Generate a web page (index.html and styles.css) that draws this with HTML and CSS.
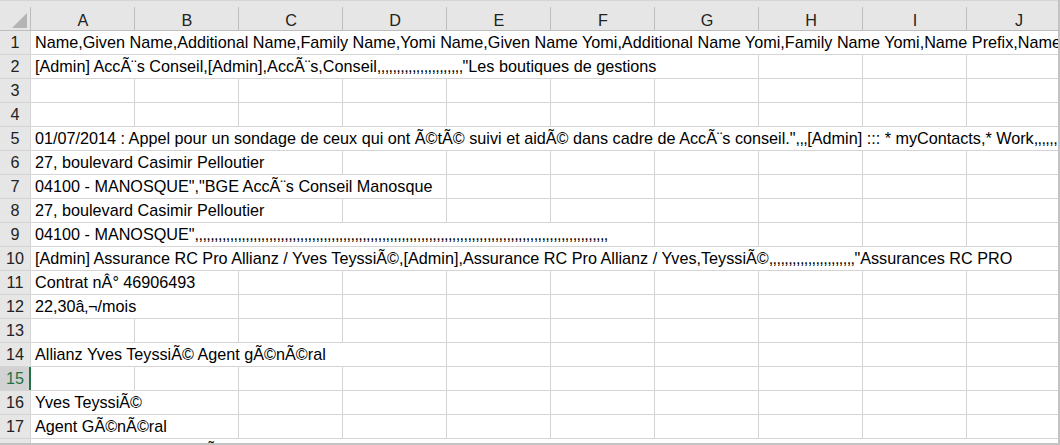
FILE: index.html
```html
<!DOCTYPE html>
<html lang="fr">
<head>
<meta charset="utf-8">
<title>contacts.csv</title>
<link rel="stylesheet" href="styles.css">
</head>
<body>
<div class="sheet">
  <div class="colhead">
    <div class="corner"><span class="tri"></span></div>
    <div class="ch">A</div><div class="ch">B</div><div class="ch">C</div><div class="ch">D</div><div class="ch">E</div>
    <div class="ch">F</div><div class="ch">G</div><div class="ch">H</div><div class="ch">I</div><div class="ch">J</div>
  </div>
  <div class="grid">
    <div class="rh">1</div><div class="c s10">Name,Given Name,Additional Name,Family Name,Yomi Name,Given Name Yomi,Additional Name Yomi,Family Name Yomi,Name Prefix,Name Suffix,Initials,Nickname</div>

    <div class="rh">2</div><div class="c s7">[Admin] AccÃ¨s Conseil,[Admin],AccÃ¨s,Conseil<span class="cm">,,,,,,,,,,,,,,,,,,,,,,</span>"Les boutiques de gestions</div><div class="c"></div><div class="c"></div><div class="c"></div>

    <div class="rh">3</div><div class="c"></div><div class="c"></div><div class="c"></div><div class="c"></div><div class="c"></div><div class="c"></div><div class="c"></div><div class="c"></div><div class="c"></div><div class="c"></div>

    <div class="rh">4</div><div class="c"></div><div class="c"></div><div class="c"></div><div class="c"></div><div class="c"></div><div class="c"></div><div class="c"></div><div class="c"></div><div class="c"></div><div class="c"></div>

    <div class="rh">5</div><div class="c s10">01/07/2014 : Appel pour un sondage de ceux qui ont Ã©tÃ© suivi et aidÃ© dans cadre de AccÃ¨s conseil."<span class="cm">,,,</span>[Admin] ::: * myContacts,* Work<span class="cm">,,,,,,,</span></div>

    <div class="rh">6</div><div class="c s3">27, boulevard Casimir Pelloutier</div><div class="c"></div><div class="c"></div><div class="c"></div><div class="c"></div><div class="c"></div><div class="c"></div><div class="c"></div>

    <div class="rh">7</div><div class="c s4">04100 - MANOSQUE","BGE AccÃ¨s Conseil Manosque</div><div class="c"></div><div class="c"></div><div class="c"></div><div class="c"></div><div class="c"></div><div class="c"></div>

    <div class="rh">8</div><div class="c s3">27, boulevard Casimir Pelloutier</div><div class="c"></div><div class="c"></div><div class="c"></div><div class="c"></div><div class="c"></div><div class="c"></div><div class="c"></div>

    <div class="rh">9</div><div class="c s6">04100 - MANOSQUE"<span class="cm">,,,,,,,,,,,,,,,,,,,,,,,,,,,,,,,,,,,,,,,,,,,,,,,,,,,,,,,,,,,,,,,,,,,,,,,,,,,,,,,,,,,,,,,,,,,,,,,,,,,,,,,,,,</span></div><div class="c"></div><div class="c"></div><div class="c"></div><div class="c"></div>

    <div class="rh">10</div><div class="c s10">[Admin] Assurance RC Pro Allianz / Yves TeyssiÃ©,[Admin],Assurance RC Pro Allianz / Yves,TeyssiÃ©<span class="cm">,,,,,,,,,,,,,,,,,,,,,,</span>"Assurances RC PRO</div>

    <div class="rh">11</div><div class="c s2">Contrat nÂ° 46906493</div><div class="c"></div><div class="c"></div><div class="c"></div><div class="c"></div><div class="c"></div><div class="c"></div><div class="c"></div><div class="c"></div>

    <div class="rh">12</div><div class="c s2">22,30â‚¬/mois</div><div class="c"></div><div class="c"></div><div class="c"></div><div class="c"></div><div class="c"></div><div class="c"></div><div class="c"></div><div class="c"></div>

    <div class="rh">13</div><div class="c"></div><div class="c"></div><div class="c"></div><div class="c"></div><div class="c"></div><div class="c"></div><div class="c"></div><div class="c"></div><div class="c"></div><div class="c"></div>

    <div class="rh">14</div><div class="c s4">Allianz Yves TeyssiÃ© Agent gÃ©nÃ©ral</div><div class="c"></div><div class="c"></div><div class="c"></div><div class="c"></div><div class="c"></div><div class="c"></div>

    <div class="rh sel">15</div><div class="c"></div><div class="c"></div><div class="c"></div><div class="c"></div><div class="c"></div><div class="c"></div><div class="c"></div><div class="c"></div><div class="c"></div><div class="c"></div>

    <div class="rh">16</div><div class="c s2">Yves TeyssiÃ©</div><div class="c"></div><div class="c"></div><div class="c"></div><div class="c"></div><div class="c"></div><div class="c"></div><div class="c"></div><div class="c"></div>

    <div class="rh">17</div><div class="c s2">Agent GÃ©nÃ©ral</div><div class="c"></div><div class="c"></div><div class="c"></div><div class="c"></div><div class="c"></div><div class="c"></div><div class="c"></div><div class="c"></div>

    <div class="rh">18</div><div class="c s10">Interlocuteur : M. TeyssiÃ© - Agent Allianz</div>
  </div>
</div>
</body>
</html>
```
FILE: styles.css
```css
* { box-sizing: border-box; }

html, body {
  margin: 0;
  padding: 0;
  background: #ffffff;
}

.sheet {
  width: 1060px;
  height: 445px;
  overflow: hidden;
  border-right: 2px solid #c3c3c3;
  border-bottom: 2px solid #c3c3c3;
  background: #ffffff;
  font-family: "Liberation Sans", Arial, sans-serif;
  font-size: 16.2px;
  color: #000000;
}

.colhead {
  display: grid;
  grid-template-columns: 31px repeat(10, 104px);
  width: max-content;
  height: 31px;
  background: #e6e6e6;
  border-top: 1px solid #d6d6d6;
  border-bottom: 1px solid #bdbdbd;
}

.corner {
  display: flex;
  align-items: flex-end;
  justify-content: flex-end;
  padding: 0 4px 3px 0;
  position: relative;
}

.corner::after,
.ch::after {
  content: "";
  position: absolute;
  right: 0;
  top: 6px;
  bottom: 0;
  border-right: 1px solid #bdbdbd;
}

.tri {
  width: 0;
  height: 0;
  border-left: 15px solid transparent;
  border-bottom: 15px solid #b4b4b4;
}

.ch {
  position: relative;
  padding-top: 8px;
  text-align: center;
  line-height: 22px;
  color: #222222;
}

.grid {
  display: grid;
  grid-template-columns: 30px repeat(10, 103px);
  grid-auto-rows: 23px;
  gap: 1px;
  width: max-content;
  background: #d4d4d4;
}

.rh {
  background: #e6e6e6;
  text-align: center;
  line-height: 23px;
  color: #222222;
}

.rh.sel {
  background: #d2d2d2;
  color: #217346;
  box-shadow: inset -1px 0 0 #217346, 1px 0 0 #217346;
}

.c {
  background: #ffffff;
  padding: 0 4px;
  line-height: 23px;
  white-space: nowrap;
  overflow: hidden;
}

.cm {
  letter-spacing: -0.6px;
}

.s2 { grid-column: span 2; }
.s3 { grid-column: span 3; }
.s4 { grid-column: span 4; }
.s6 { grid-column: span 6; }
.s7 { grid-column: span 7; }
.s10 { grid-column: span 10; }
```
